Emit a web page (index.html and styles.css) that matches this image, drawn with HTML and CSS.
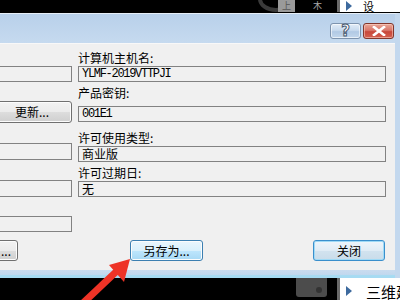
FILE: index.html
```html
<!DOCTYPE html>
<html lang="zh-CN">
<head>
    <meta charset="UTF-8">
    <meta name="viewport" content="width=device-width, initial-scale=1.0">
    <title>系统信息</title>
    <link rel="stylesheet" href="styles.css">
</head>
<body>
    <!-- Fondo del escritorio arriba -->
    <div class="desk desk-top">
        <div class="dial"></div>
        <div class="key">上</div>
        <div class="mark">木</div>
        <div class="side"><span class="tri"></span>设</div>
    </div>

    <div class="window">
        <div class="titlebar">
            <button class="cap help">?</button>
            <button class="cap close">
                <svg width="14" height="10" viewBox="0 0 14 10"><path d="M2 1 L12 9 M12 1 L2 9" stroke="#fff" stroke-width="2.6" stroke-linecap="square"/></svg>
            </button>
        </div>

        <div class="client">
            <div class="form">
                <div class="col-left">
                    <div class="field l1"></div>
                    <button class="btn update">更新...</button>
                    <div class="field l3"></div>
                    <div class="field l4"></div>
                    <div class="field l5"></div>
                </div>
                <div class="col-right">
                    <div class="label r1">计算机主机名:</div>
                    <div class="field mono">YLMF-2019VTTPJI</div>
                    <div class="label r2">产品密钥:</div>
                    <div class="field mono f2">001E1</div>
                    <div class="label r3">许可使用类型:</div>
                    <div class="field f3">商业版</div>
                    <div class="label r4">许可过期日:</div>
                    <div class="field f4">无</div>
                </div>
            </div>

            <div class="actions">
                <button class="btn cut">...</button>
                <button class="btn hover">另存为...</button>
                <button class="btn default">关闭</button>
            </div>
        </div>
        <div class="bottom-frame"></div>
    </div>

    <!-- Fondo del escritorio abajo -->
    <div class="desk desk-bottom">
        <div class="pad"><span class="dot"></span></div>
        <div class="side"><span class="tri"></span>三维建</div>
    </div>

    <!-- Flecha roja -->
    <svg class="arrow" width="400" height="300" viewBox="0 0 400 300">
        <line x1="82" y1="304" x2="118" y2="270" stroke="#ee3326" stroke-width="7"/>
        <polygon points="130,259 109,265 124,282" fill="#ee3326"/>
    </svg>
</body>
</html>
```

FILE: styles.css
```css
body {
    margin: 0;
    width: 400px;
    height: 300px;
    overflow: hidden;
    background: #000;
    font-family: "Noto Sans CJK SC", "Liberation Sans", sans-serif;
    font-size: 12px;
    color: #000;
    position: relative;
}
.desk {
    display: flex;
    align-items: flex-start;
    background: #000;
}
.desk-top {
    height: 13px;
    overflow: hidden;
}
.desk-top .dial {
    width: 36px;
    height: 26px;
    margin: -14px 0 0 258px;
    border: 4px solid #3a3a3a;
    border-radius: 50%;
    box-sizing: border-box;
}
.desk-top .key {
    width: 17px;
    height: 12px;
    margin-left: -16px;
    background: #9a9a9a;
    color: #555;
    font-size: 9px;
    line-height: 12px;
    text-align: center;
}
.desk-top .mark {
    margin-left: 18px;
    color: #aaa;
    font-size: 9px;
    line-height: 12px;
}
.side {
    margin-left: auto;
    width: 63px;
    height: 100%;
    background: #fff;
    border-left: 3px solid #6a6a6a;
    display: flex;
    align-items: center;
    gap: 14px;
    padding-left: 6px;
    box-sizing: border-box;
    font-size: 15px;
    color: #000;
    white-space: nowrap;
}
.tri {
    width: 0;
    height: 0;
    border-top: 5px solid transparent;
    border-bottom: 5px solid transparent;
    border-left: 6px solid #3d6a9e;
    flex: none;
}
.desk-top .side {
    height: 12px;
    font-size: 11px;
    line-height: 12px;
    gap: 11px;
}
.window {
    margin-left: -100px;
    width: 500px;
    border-top: 1px solid #e6eef7;
    background: #bfd5ec;
    border-right: 5px solid #c3d8ee;
    box-sizing: border-box;
}
.titlebar {
    height: 29px;
    background: linear-gradient(#b8d0ea, #c6daef);
    display: flex;
    justify-content: flex-end;
    align-items: flex-start;
    padding: 9px 1px 0 0;
    box-sizing: border-box;
    gap: 2px;
}
.cap {
    width: 31px;
    height: 16px;
    border-radius: 3px;
    padding: 0;
    display: flex;
    align-items: center;
    justify-content: center;
}
.help {
    border: 1px solid #7d93ae;
    background: linear-gradient(#e2ecf7 0%, #c8daee 45%, #b1c9e4 55%, #c3d7ec 100%);
    box-shadow: inset 0 0 0 1px rgba(255, 255, 255, 0.6);
    color: #fff;
    font: bold 15px "DejaVu Sans", sans-serif;
    -webkit-text-stroke: 1px #4a5a70;
    line-height: 14px;
}
.close {
    border: 1px solid #83372c;
    background: linear-gradient(#e9a797 0%, #d9776a 45%, #c8473a 55%, #d4604f 100%);
    box-shadow: inset 0 0 0 1px rgba(255, 220, 210, 0.5);
}
.client {
    height: 227px;
    background: #f0f0f0;
    border-top: 1px solid #f8f8f8;
    box-sizing: border-box;
    padding: 7px 9px 0 0;
}
.form {
    display: flex;
    gap: 6px;
}
.col-left {
    width: 172px;
    display: flex;
    flex-direction: column;
}
.col-right {
    flex: 1;
    display: flex;
    flex-direction: column;
}
.field {
    height: 16px;
    border: 1px solid #828282;
    background: #f0f0f0;
    box-sizing: border-box;
    padding-left: 3px;
    line-height: 14px;
    font-size: 12px;
    white-space: nowrap;
}
.mono {
    font-family: "Liberation Mono", monospace;
    letter-spacing: -1.3px;
}
.label {
    height: 14px;
    line-height: 12px;
    padding-top: 1px;
    box-sizing: border-box;
}
.r1 { height: 15px; }
.r2 { margin-top: 4px; }
.f2 { margin-top: 6px; }
.r3 { margin-top: 9px; }
.f3 { margin-top: 1px; }
.r4 { margin-top: 4px; }
.f4 { margin-top: 1px; }
.l1 { margin-top: 15px; }
.l3 {
    margin-top: 20px;
    height: 17px;
}
.l4 {
    margin-top: 20px;
    height: 17px;
}
.l5 {
    margin-top: 19px;
}
.btn {
    height: 21px;
    border: 1px solid #707070;
    border-radius: 3px;
    background: linear-gradient(#f2f2f2 0%, #ebebeb 50%, #dddddd 50%, #cfcfcf 100%);
    box-shadow: inset 0 0 0 1px #fcfcfc;
    font-family: "Noto Sans CJK SC", sans-serif;
    font-size: 12px;
    line-height: 16px;
    padding: 0;
    color: #000;
}
.btn.update {
    margin-top: 19px;
    height: 22px;
    margin-left: 90px;
    width: 82px;
    padding-left: 2px;
}
.actions {
    display: flex;
    margin-top: 8px;
}
.btn.cut {
    margin-left: 43px;
    width: 75px;
    text-align: right;
    padding-right: 6px;
}
.hover {
    margin-left: 112px;
    width: 73px;
    border-color: #3c7fb1;
    background: linear-gradient(#eaf6fd 0%, #d9f0fc 50%, #bee6fd 50%, #a7d9f5 100%);
}
.default {
    margin-left: 110px;
    width: 72px;
    border-color: #3a8fcc;
    box-shadow: inset 0 0 0 1px #9fdaf6;
    background: linear-gradient(#eef5fb 0%, #e0ecf5 50%, #d2e3ef 50%, #c9dcea 100%);
}
.bottom-frame {
    height: 8px;
    background: linear-gradient(#c9dcef 0%, #c3d8ee 55%, #a6dbf2 70%, #a6dbf2 100%);
}
.desk-bottom {
    height: 22px;
}
.pad {
    width: 31px;
    height: 19px;
    margin-left: 296px;
    background: #4c4c4c;
    border-radius: 0 0 3px 3px;
    position: relative;
}
.dot {
    position: absolute;
    right: 5px;
    bottom: 4px;
    width: 6px;
    height: 6px;
    border-radius: 50%;
    background: #333;
}
.desk-bottom .side {
    height: 22px;
    align-items: flex-start;
    padding-top: 3px;
}
.desk-bottom .tri {
    margin-top: 5px;
}
.arrow {
    position: absolute;
    left: 0;
    top: 0;
    pointer-events: none;
}
```
